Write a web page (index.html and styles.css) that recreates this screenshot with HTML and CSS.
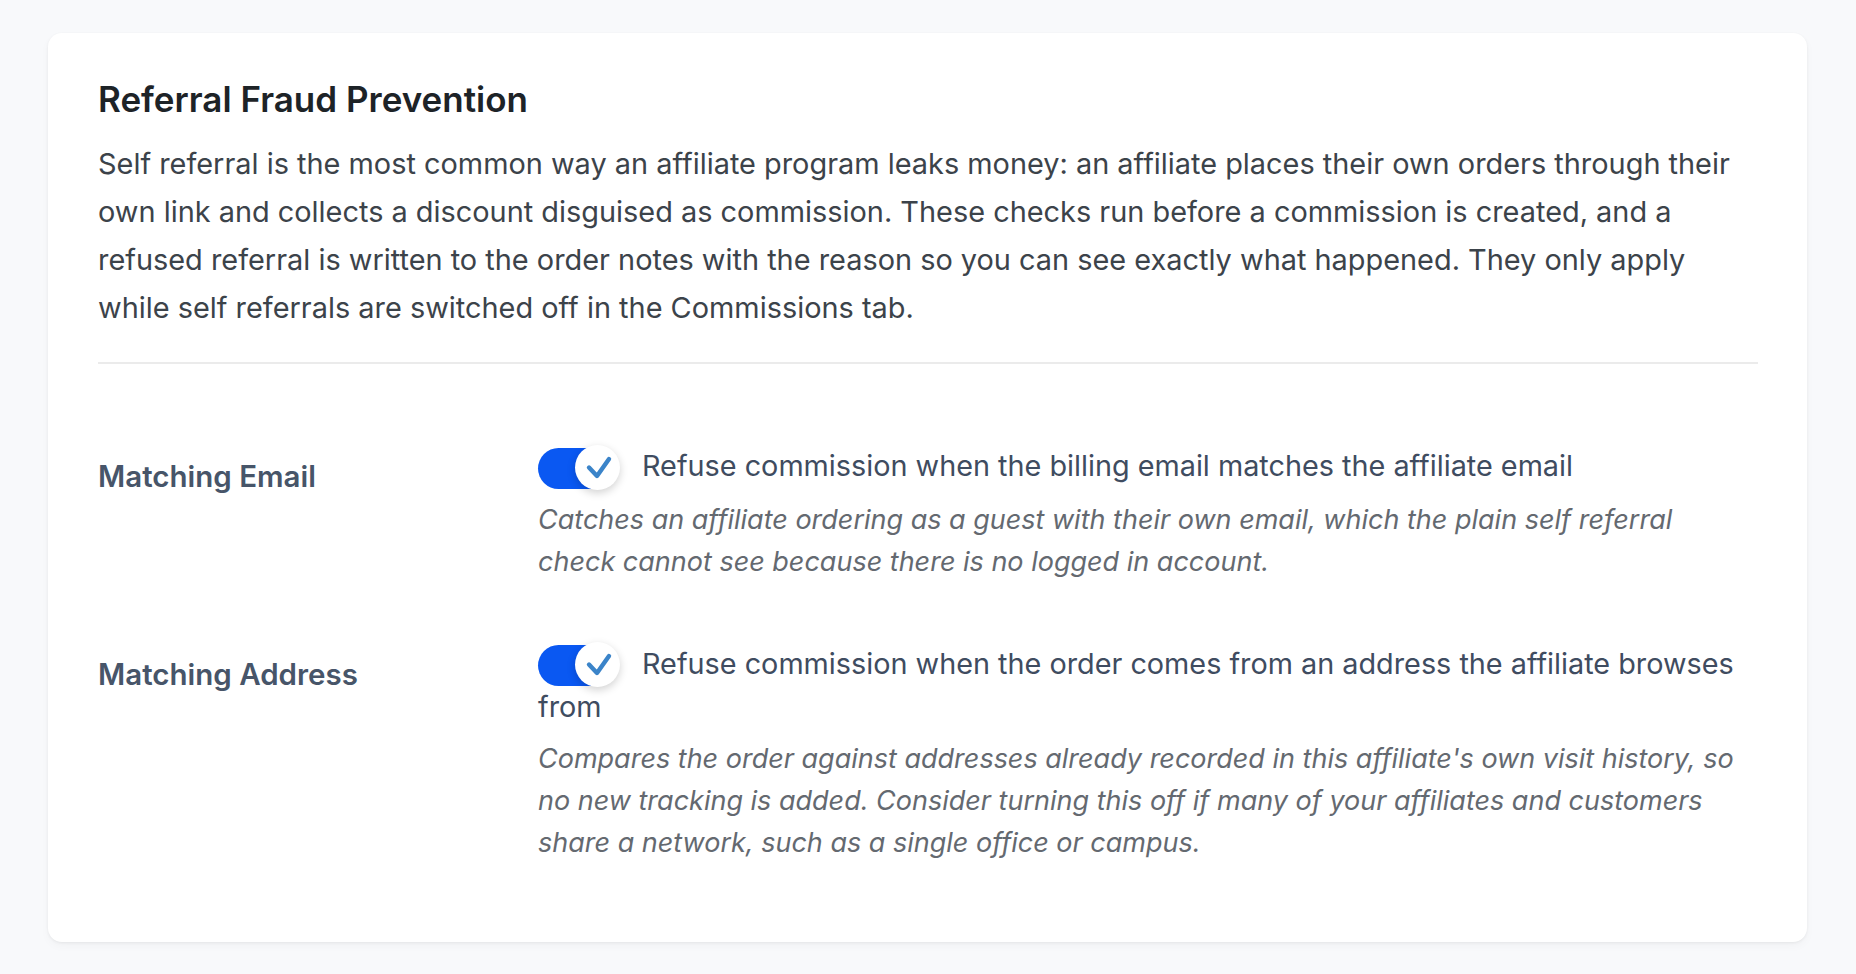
FILE: index.html
```html
<!DOCTYPE html>
<html lang="en">
<head>
    <meta charset="UTF-8">
    <meta name="viewport" content="width=device-width, initial-scale=1.0">
    <title>Referral Fraud Prevention</title>
    <link rel="stylesheet" href="styles.css">
</head>
<body>
    <div class="card">
        <h2>Referral Fraud Prevention</h2>
        <p class="intro">Self referral is the most common way an affiliate program leaks money: an affiliate places their own orders through their own link and collects a discount disguised as commission. These checks run before a commission is created, and a refused referral is written to the order notes with the reason so you can see exactly what happened. They only apply while self referrals are switched off in the Commissions tab.</p>
        <hr class="divider">
        <div class="settings">
            <div class="row">
                <div class="row-label">Matching Email</div>
                <div class="row-field">
                    <label class="option"><span class="toggle on"><span class="knob"><svg viewBox="0 0 44 44" width="44" height="44"><path d="M14 22.5l8 8.5L34 14" fill="none" stroke="#3b84c9" stroke-width="4.4" stroke-linecap="round" stroke-linejoin="round"/></svg></span></span>Refuse commission when the billing email matches the affiliate email</label>
                    <p class="description">Catches an affiliate ordering as a guest with their own email, which the plain self referral check cannot see because there is no logged in account.</p>
                </div>
            </div>
            <div class="row">
                <div class="row-label">Matching Address</div>
                <div class="row-field">
                    <label class="option"><span class="toggle on"><span class="knob"><svg viewBox="0 0 44 44" width="44" height="44"><path d="M14 22.5l8 8.5L34 14" fill="none" stroke="#3b84c9" stroke-width="4.4" stroke-linecap="round" stroke-linejoin="round"/></svg></span></span>Refuse commission when the order comes from an address the affiliate browses from</label>
                    <p class="description">Compares the order against addresses already recorded in this affiliate's own visit history, so no new tracking is added. Consider turning this off if many of your affiliates and customers share a network, such as a single office or campus.</p>
                </div>
            </div>
        </div>
    </div>
</body>
</html>
```

FILE: styles.css
```css
body { margin: 0; padding: 33px 49px 31px 48px; background: #f8f9fb; font-family: Inter, "Noto Sans", sans-serif; }
.card { background: #fff; border-radius: 14px; padding: 44px 49px 48px 50px; box-shadow: 0 1px 3px rgba(0,0,0,0.06), 0 4px 10px rgba(0,0,0,0.03); }
.card h2 { margin: 0; font-size: 35px; line-height: 45px; font-weight: 600; color: #1d2327; }
.intro { margin: 18px 0 0; font-size: 28.9px; line-height: 48px; color: #3c434a; }
.divider { margin: 30px 0 51px; border: 0; border-top: 2px solid #ebebeb; }
.row { display: grid; grid-template-columns: 440px 1fr; }
.row-label { padding-top: 40px; font-size: 29.5px; line-height: 42px; font-weight: 600; color: #475569; }
.row-field { padding: 30px 8px 30px 0; }
.option { font-size: 28.8px; line-height: 42px; color: #3f4c60; }
.toggle { display: inline-block; position: relative; width: 80px; height: 41px; margin-right: 24px; vertical-align: middle; border-radius: 21px; background: #0a58f2; }
.knob { position: absolute; right: -2px; top: -3px; width: 45px; height: 45px; border-radius: 50%; background: #fff; box-shadow: 0 3px 8px rgba(0,0,0,0.18); }
.knob svg { display: block; }
.description { margin: 10px 0 0; font-size: 27px; line-height: 42px; font-style: italic; color: #646970; }
```
